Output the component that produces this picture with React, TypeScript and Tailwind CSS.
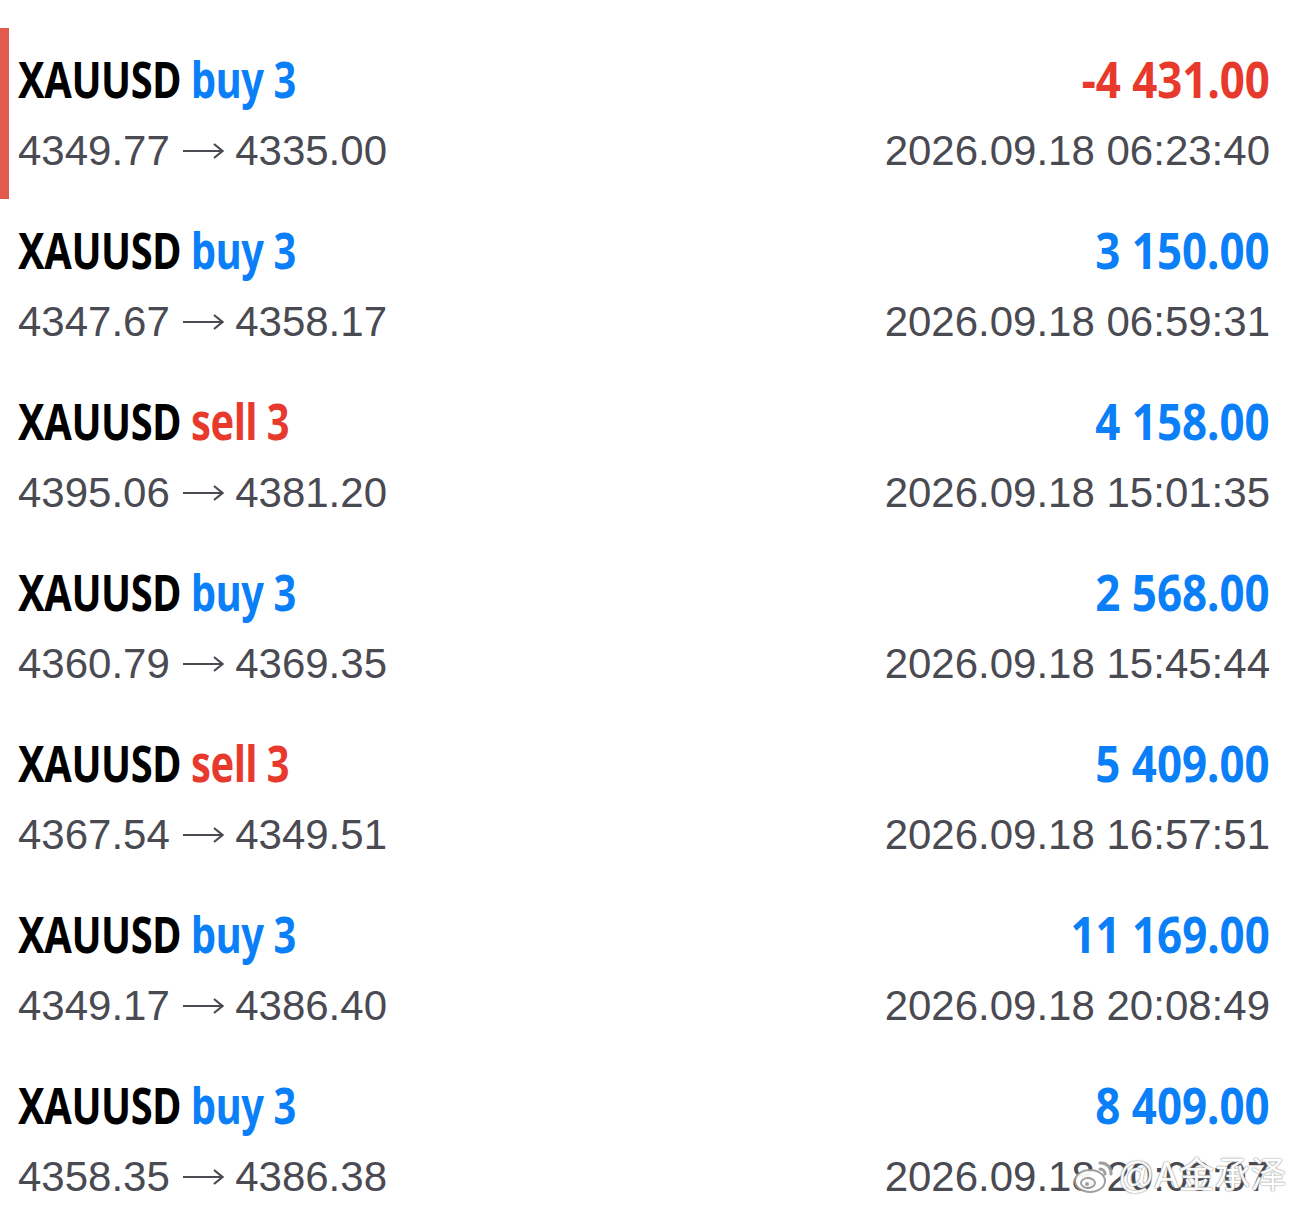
const trades = [
  { side: "buy", from: "4349.77", to: "4335.00", pnl: "-4 431.00", time: "2026.09.18 06:23:40", active: true },
  { side: "buy", from: "4347.67", to: "4358.17", pnl: "3 150.00", time: "2026.09.18 06:59:31" },
  { side: "sell", from: "4395.06", to: "4381.20", pnl: "4 158.00", time: "2026.09.18 15:01:35" },
  { side: "buy", from: "4360.79", to: "4369.35", pnl: "2 568.00", time: "2026.09.18 15:45:44" },
  { side: "sell", from: "4367.54", to: "4349.51", pnl: "5 409.00", time: "2026.09.18 16:57:51" },
  { side: "buy", from: "4349.17", to: "4386.40", pnl: "11 169.00", time: "2026.09.18 20:08:49" },
  { side: "buy", from: "4358.35", to: "4386.38", pnl: "8 409.00", time: "2026.09.18 20:09:07" },
];

// no condensed face installed, so squeeze the bold one
const condensed = "font-['Noto_Sans',sans-serif] font-bold text-[51px] leading-[54px] whitespace-nowrap";
const regular = "font-['Liberation_Sans','Helvetica',sans-serif] text-[42px] leading-[50px] text-[#4a4a52] whitespace-nowrap";

function Arrow() {
  return (
    <svg width="42" height="20" viewBox="0 0 42 20" fill="none" className="inline-block align-[4px]">
      <path d="M1 10 H40" stroke="#4a4a52" strokeWidth="2.2" />
      <path d="M32 3 L40.5 10 L32 17" stroke="#4a4a52" strokeWidth="2.2" />
    </svg>
  );
}

function WeiboMark() {
  return (
    <svg width="44" height="38" viewBox="0 0 44 38" fill="none">
      <ellipse cx="18" cy="24" rx="15" ry="11" fill="white" stroke="#9a9a9a" strokeWidth="2" />
      <ellipse cx="16" cy="26" rx="7" ry="5" fill="white" stroke="#9a9a9a" strokeWidth="2" />
      <circle cx="15" cy="27" r="2" fill="#9a9a9a" />
      <path d="M28 6 a10 10 0 0 1 11 11" stroke="#9a9a9a" strokeWidth="3" strokeLinecap="round" />
      <path d="M28 12 a5 5 0 0 1 5 5" stroke="#9a9a9a" strokeWidth="3" strokeLinecap="round" />
    </svg>
  );
}

export default function App() {
  return (
    <div className="relative w-[1290px] h-[1207px] overflow-hidden bg-white pt-[28px]">
      {trades.map((t, i) => (
        <div
          key={i}
          className={`flex h-[171px] items-center justify-between border-l-[9px] pl-[9px] pr-[20px] ${
            t.active ? "border-[#e05b4b]" : "border-transparent"
          }`}
        >
          {/* Left */}
          <div className="flex flex-col items-start gap-[21px]">
            <p className={`${condensed} origin-left scale-x-[0.78] tracking-[-0.5px] text-black`}>
              XAUUSD{" "}
              <span className={t.side === "buy" ? "text-[#0a7ff8]" : "text-[#e83a2c]"}>
                {t.side} 3
              </span>
            </p>
            <p className={regular}>
              {t.from} <Arrow /> {t.to}
            </p>
          </div>

          {/* Right */}
          <div className="flex flex-col items-end gap-[21px]">
            <p
              className={`${condensed} origin-right scale-x-[0.86] ${
                t.pnl.startsWith("-") ? "text-[#e83a2c]" : "text-[#0a7ff8]"
              }`}
            >
              {t.pnl}
            </p>
            <p className={regular}>{t.time}</p>
          </div>
        </div>
      ))}

      {/* Watermark */}
      <div className="absolute left-[1072px] top-[1155px] flex items-center gap-[2px] opacity-95">
        <WeiboMark />
        <span className="font-['Liberation_Sans','Noto_Sans_CJK_SC',sans-serif] text-[36px] leading-[42px] text-white [text-shadow:0_0_2px_#8a8a8a,0_0_1px_#8a8a8a]">
          @A金承泽
        </span>
      </div>
    </div>
  );
}
